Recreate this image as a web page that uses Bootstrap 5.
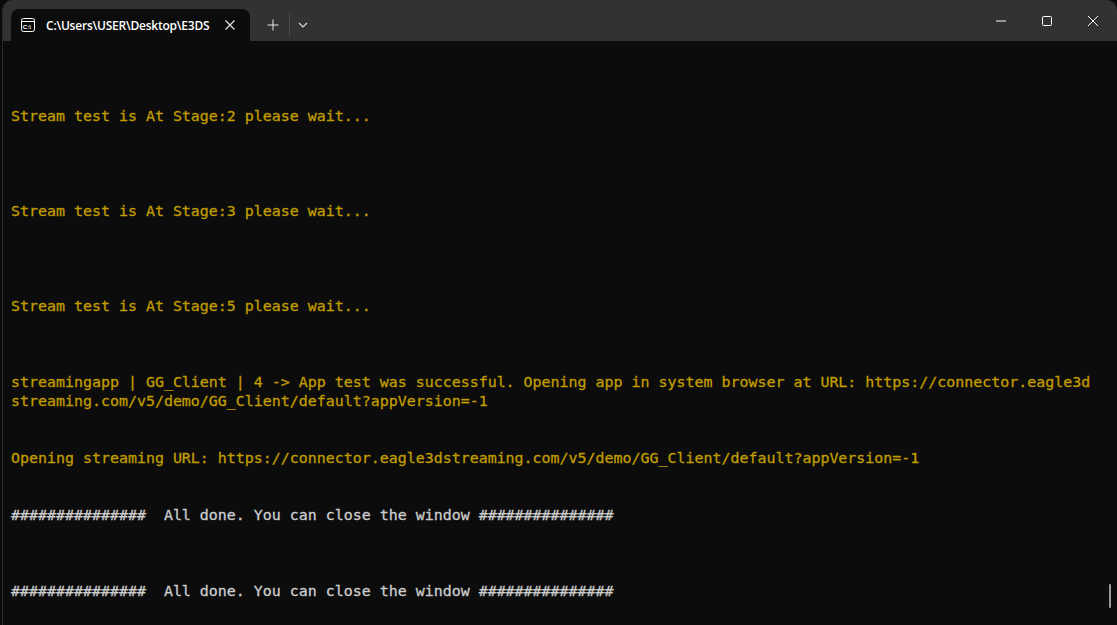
<!DOCTYPE html>
<html lang="en">
<head>
<meta charset="utf-8">
<title>Terminal</title>
<link href="https://cdn.jsdelivr.net/npm/bootstrap@5.3.0/dist/css/bootstrap.min.css" rel="stylesheet">
<style>
html,body{height:100%;margin:0;background:#0a0a0a;overflow:hidden}
.term-window{width:1115px;height:625px;margin-left:2px;background:#0c0c0c;border-radius:10px 10px 0 0;overflow:hidden;position:relative;border-left:1px solid #2a2a2a}
.tab-strip{height:41px;background:#323232;flex:none}
.term-tab{width:239px;height:32px;margin-left:8px;margin-top:9px;background:#0c0c0c;border-radius:8px 8px 0 0;padding-left:10px;color:#fff;font:600 12px/32px "Open Sans","Noto Sans",sans-serif;position:relative}
.tab-title{margin-left:11px;width:179px;white-space:nowrap;letter-spacing:-.22px;padding-top:2px}
.strip-tools{height:32px;margin-top:9px;margin-left:17px}
.strip-sep{width:1px;height:24px;background:#4a4a4a;margin:0 8px 0 10px}
.win-btn{width:46px;height:41px}
.win-group{margin-right:1px}
.term-body{padding-top:9px;font-family:"DejaVu Sans Mono","Liberation Mono",monospace;font-size:14.94px;line-height:19px;color:#cccccc;flex:1 1 auto;padding-left:8px;white-space:pre;-webkit-text-stroke:.3px currentColor}
.term-row{height:19px}
.amber{color:#c19c00}
.scroll-thumb{position:absolute;right:6px;top:584px;width:2px;height:24px;background:#9a9a9a;border-radius:1px}
</style>
</head>
<body>
<div class="term-window d-flex flex-column">
  <div class="tab-strip d-flex align-items-start">
    <div class="term-tab d-flex align-items-center">
      <svg width="14" height="14" viewBox="0 0 14 14" fill="none"><rect x=".5" y=".5" width="13" height="13" rx="2" stroke="#fff"/><path d="M1 3.5h12" stroke="#fff"/><text x="1.8" y="10.6" fill="#fff" font-family="Liberation Sans" font-size="6.2" font-weight="700">C:\</text></svg>
      <div class="tab-title">C:\Users\USER\Desktop\E3DS</div>
      <svg width="10" height="10" viewBox="0 0 10 10"><path d="M.5.5l9 9M9.5.5l-9 9" stroke="#e8e8e8" stroke-width="1.1"/></svg>
    </div>
    <div class="d-flex align-items-center strip-tools">
      <svg width="12" height="12" viewBox="0 0 12 12"><path d="M6 .5v11M.5 6h11" stroke="#e8e8e8" stroke-width="1"/></svg>
      <div class="strip-sep"></div>
      <svg width="10" height="6" viewBox="0 0 10 6" fill="none"><path d="M1 1l4 4 4-4" stroke="#e0e0e0" stroke-width="1.1"/></svg>
    </div>
    <div class="d-flex ms-auto win-group">
      <div class="win-btn d-flex align-items-center justify-content-center"><svg width="10" height="2" viewBox="0 0 10 2"><path d="M0 1h10" stroke="#fff"/></svg></div>
      <div class="win-btn d-flex align-items-center justify-content-center"><svg width="10" height="10" viewBox="0 0 10 10" fill="none"><rect x=".5" y=".5" width="9" height="9" rx="1" stroke="#fff"/></svg></div>
      <div class="win-btn d-flex align-items-center justify-content-center"><svg width="10" height="10" viewBox="0 0 10 10"><path d="M0 0l10 10M10 0L0 10" stroke="#fff"/></svg></div>
    </div>
  </div>
  <div class="term-body">
<div class="term-row"></div><div class="term-row"></div><div class="term-row amber">Stream test is At Stage:2 please wait...</div><div class="term-row"></div><div class="term-row"></div><div class="term-row"></div><div class="term-row"></div><div class="term-row amber">Stream test is At Stage:3 please wait...</div><div class="term-row"></div><div class="term-row"></div><div class="term-row"></div><div class="term-row"></div><div class="term-row amber">Stream test is At Stage:5 please wait...</div><div class="term-row"></div><div class="term-row"></div><div class="term-row"></div><div class="term-row amber">streamingapp | GG_Client | 4 -&gt; App test was successful. Opening app in system browser at URL: https://connector.eagle3d</div><div class="term-row amber">streaming.com/v5/demo/GG_Client/default?appVersion=-1</div><div class="term-row"></div><div class="term-row"></div><div class="term-row amber">Opening streaming URL: https://connector.eagle3dstreaming.com/v5/demo/GG_Client/default?appVersion=-1</div><div class="term-row"></div><div class="term-row"></div><div class="term-row">###############  All done. You can close the window ###############</div><div class="term-row"></div><div class="term-row"></div><div class="term-row"></div><div class="term-row">###############  All done. You can close the window ###############</div></div>
  <div class="scroll-thumb"></div>
</div>
<script src="https://cdn.jsdelivr.net/npm/bootstrap@5.3.0/dist/js/bootstrap.bundle.min.js"></script>
</body>
</html>
